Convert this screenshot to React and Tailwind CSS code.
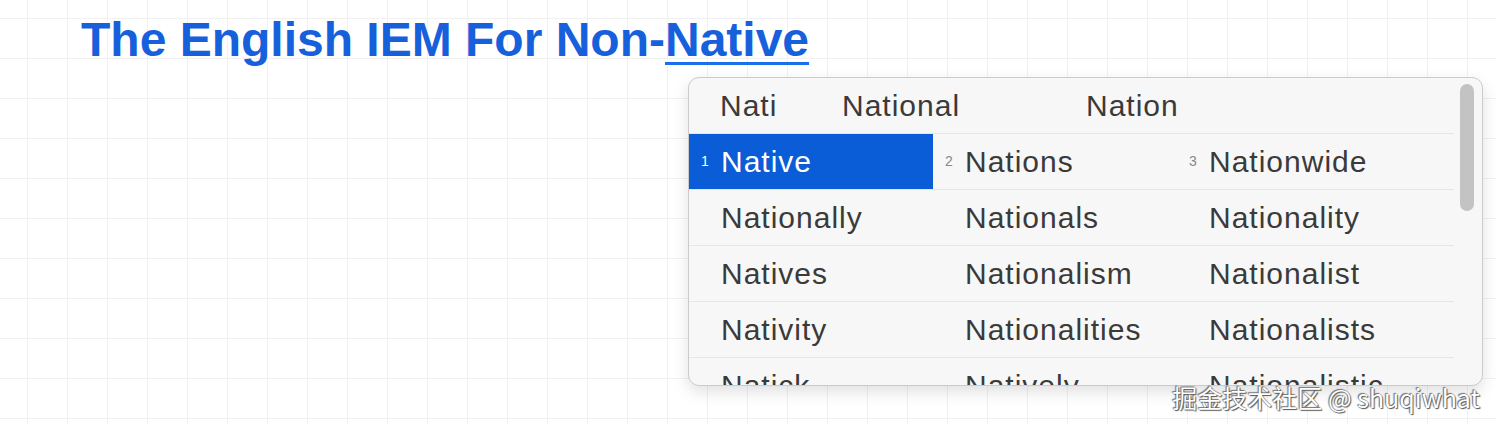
import React from 'react';

const rows = [
    ['Native', 'Nations', 'Nationwide'],
    ['Nationally', 'Nationals', 'Nationality'],
    ['Natives', 'Nationalism', 'Nationalist'],
    ['Nativity', 'Nationalities', 'Nationalists'],
    ['Natick', 'Natively', 'Nationalistic'],
];

function Cell({ word, num, active }) {
    return (
        <div className={`w-[244px] h-full flex items-center ${active ? 'bg-[#0a5dd6] text-white' : 'text-[#3a3a3a]'}`}>
            <span className={`w-[32px] pl-[12px] text-[14px] ${active ? 'text-white' : 'text-[#888888]'}`}>{num}</span>
            <span className="text-[30px] tracking-[1px]">{word}</span>
        </div>
    );
}

export default function App() {
    return (
        <div className="relative w-[1496px] h-[424px] overflow-hidden bg-white bg-[linear-gradient(to_right,#f1f1f1_1px,transparent_1px),linear-gradient(to_bottom,#f1f1f1_1px,transparent_1px)] [background-size:40px_40px] [background-position:27px_18px] font-['Liberation_Sans',Arial,sans-serif]">
            <h1 className="pl-[81px] pt-[16px] text-[48px] leading-none font-bold text-[#1760dc]">
                The English IEM For Non-<span className="underline decoration-[3px] underline-offset-[6px] decoration-[#1a6fea]">Native</span>
            </h1>

            {/* candidate window */}
            <div className="absolute left-[688px] top-[77px] w-[795px] h-[309px] rounded-[11px] border border-[#cbcbcb] bg-[#f7f7f7] shadow-[0_6px_16px_rgba(0,0,0,0.12)] overflow-hidden">
                <div className="w-[765px]">
                    <div className="h-[56px] flex items-center border-b border-[#e6e6e6] text-[30px] tracking-[1px] text-[#3a3a3a]">
                        <span className="pl-[31px] w-[153px]">Nati</span>
                        <span className="w-[244px]">National</span>
                        <span>Nation</span>
                    </div>
                    {rows.map((r, i) => (
                        <div key={i} className="h-[56px] flex border-b border-[#e6e6e6]">
                            {r.map((w, j) => (
                                <Cell key={w} word={w} num={i === 0 ? j + 1 : ''} active={i === 0 && j === 0} />
                            ))}
                        </div>
                    ))}
                </div>
                <div className="absolute left-[771px] top-[6px] w-[14px] h-[127px] rounded-full bg-[#c3c3c3]" />
            </div>

            <div className="absolute right-[16px] top-[379px] text-[25px] text-white font-['Noto_Sans_CJK_SC',sans-serif] [text-shadow:0_0_1px_#555,1px_1px_1px_#555,-1px_-1px_1px_#777]">
                掘金技术社区 @ shuqiwhat
            </div>
        </div>
    );
}
